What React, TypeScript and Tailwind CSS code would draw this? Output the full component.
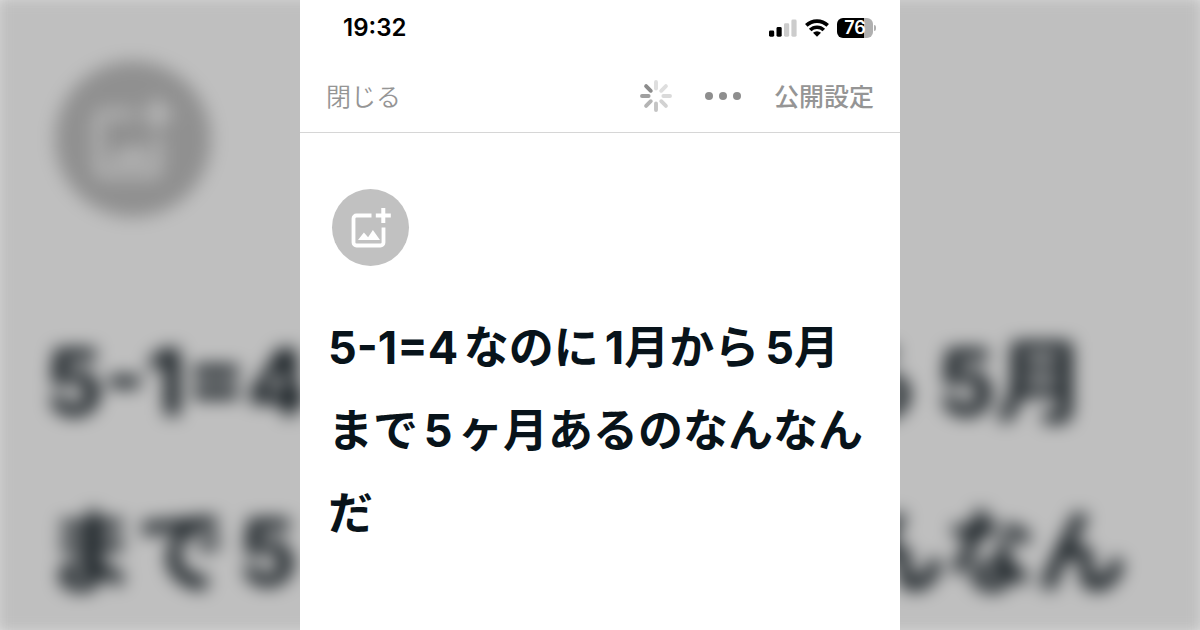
import { clsx } from "clsx";

const SANS = "font-['Inter','Noto_Sans_CJK_JP',sans-serif]";

function SignalIcon() {
  return (
    <svg width="28" height="18" viewBox="0 0 28 18" aria-hidden="true">
      <rect x="0" y="11.5" width="5.2" height="6.2" rx="1.4" fill="#000" />
      <rect x="7.5" y="8" width="5.2" height="9.7" rx="1.4" fill="#000" />
      <rect x="15" y="4.3" width="5.2" height="13.4" rx="1.4" fill="#ccc" />
      <rect x="22.4" y="0.6" width="5.2" height="17.1" rx="1.4" fill="#ccc" />
    </svg>
  );
}

function WifiIcon() {
  return (
    <svg width="24" height="18" viewBox="0 0 24 18" aria-hidden="true">
      <g fill="none" stroke="#000" strokeWidth="3.6">
        <path d="M1.3 6.4a15.4 15.4 0 0 1 21.4 0" />
        <path d="M5.2 11a9.6 9.6 0 0 1 13.6 0" />
      </g>
      <path d="M12 17.8 8 13.8a5.8 5.8 0 0 1 8 0z" fill="#000" />
    </svg>
  );
}

function Battery() {
  return (
    <div className="flex items-center gap-px">
      <div className="flex h-5 w-9 items-center justify-center rounded-md bg-linear-to-r from-black from-76% to-[#b0b0b0] to-76% text-lg leading-none font-semibold text-white">
        76
      </div>
      <div className="h-1.5 w-0.5 rounded-r-full bg-[#b0b0b0]" />
    </div>
  );
}

const SPOKES = ["#dedede", "#dedede", "#dadada", "#d2d2d2", "#c4c4c4", "#b4b4b4", "#a0a0a0", "#8c8c8c"];

function Spinner() {
  return (
    <svg width="32" height="32" viewBox="-16 -16 32 32" role="img" aria-label="保存中">
      {SPOKES.map((color, i) => (
        <path key={i} d="M0-7.4V-14" stroke={color} strokeWidth="3.9" strokeLinecap="round" transform={`rotate(${i * 45})`} />
      ))}
    </svg>
  );
}

function AddImageIcon({ className }: { className: string }) {
  return (
    <svg className={className} viewBox="0 0 40 40" aria-hidden="true">
      <path d="M20.5 7.5H5.5a3 3 0 0 0-3 3v24a3 3 0 0 0 3 3h24a3 3 0 0 0 3-3V19.5" fill="none" stroke="#fff" strokeWidth="3.8" />
      <path d="M32.3 0v15M24.8 7.5h15" stroke="#fff" strokeWidth="4" />
      <path d="M7 32l5.9-7.5 4.2 4.8 4.8-7.3L29 32z" fill="#fff" />
    </svg>
  );
}

/** The title, with a small space set before each month. */
function TitleText({ monthSpace }: { monthSpace: string }) {
  const month = clsx("[text-autospace:no-autospace]", monthSpace);
  return (
    <>
      5-1=4なのに<span className={month}>1月</span>から<span className={month}>5月</span>まで5ヶ月あるのなんなんだ
    </>
  );
}

function Backdrop() {
  return (
    <div aria-hidden="true" className="absolute -inset-2 overflow-hidden bg-white blur-[9px]">
      <div className="flex flex-col items-start pt-[69px] pl-[63px]">
        <div className="flex size-[156px] items-center justify-center rounded-full bg-[#c1c1c1]">
          <AddImageIcon className="size-20" />
        </div>
        <div className="mt-20 -ml-2.5 w-[1100px] text-[91px] leading-[170px] font-bold text-[#08131a] [text-autospace:normal]">
          <TitleText monthSpace="ms-4" />
        </div>
      </div>
      <div className="absolute inset-0 bg-black/25" />
    </div>
  );
}

export default function App() {
  return (
    <div className={clsx("relative flex h-screen justify-center overflow-hidden bg-white", SANS)}>
      <Backdrop />
      <div className="relative flex w-1/2 min-w-[600px] flex-col overflow-hidden bg-white">
        <div className="flex h-14 items-center justify-between pr-6 pl-[43px]">
          <time className="text-2xl font-semibold text-black">19:32</time>
          <div className="flex items-center gap-2">
            <SignalIcon />
            <WifiIcon />
            <Battery />
          </div>
        </div>
        <header className="flex h-[77px] items-center border-b border-[#d6d6d6] px-[26px] pt-1 text-[25px] text-[#959595]">
          <button type="button" className="pt-1 font-[350]">閉じる</button>
          <div className="ml-auto flex items-center">
            <Spinner />
            <button type="button" aria-label="その他" className="mx-[33px] flex gap-[6px]">
              <span className="size-2 rounded-full bg-[#8e8e8e]" />
              <span className="size-2 rounded-full bg-[#8e8e8e]" />
              <span className="size-2 rounded-full bg-[#8e8e8e]" />
            </button>
            <button type="button" className="pt-1 font-medium">公開設定</button>
          </div>
        </header>
        <main className="px-7 pt-14">
          <button type="button" aria-label="画像を追加" className="ml-1 flex size-[77px] items-center justify-center rounded-full bg-[#c1c1c1]">
            <AddImageIcon className="size-10" />
          </button>
          <h1 className="mt-10 text-[45px] leading-[83px] font-bold text-[#08131a] [text-autospace:normal]">
            <TitleText monthSpace="ms-1.5" />
          </h1>
        </main>
      </div>
    </div>
  );
}
